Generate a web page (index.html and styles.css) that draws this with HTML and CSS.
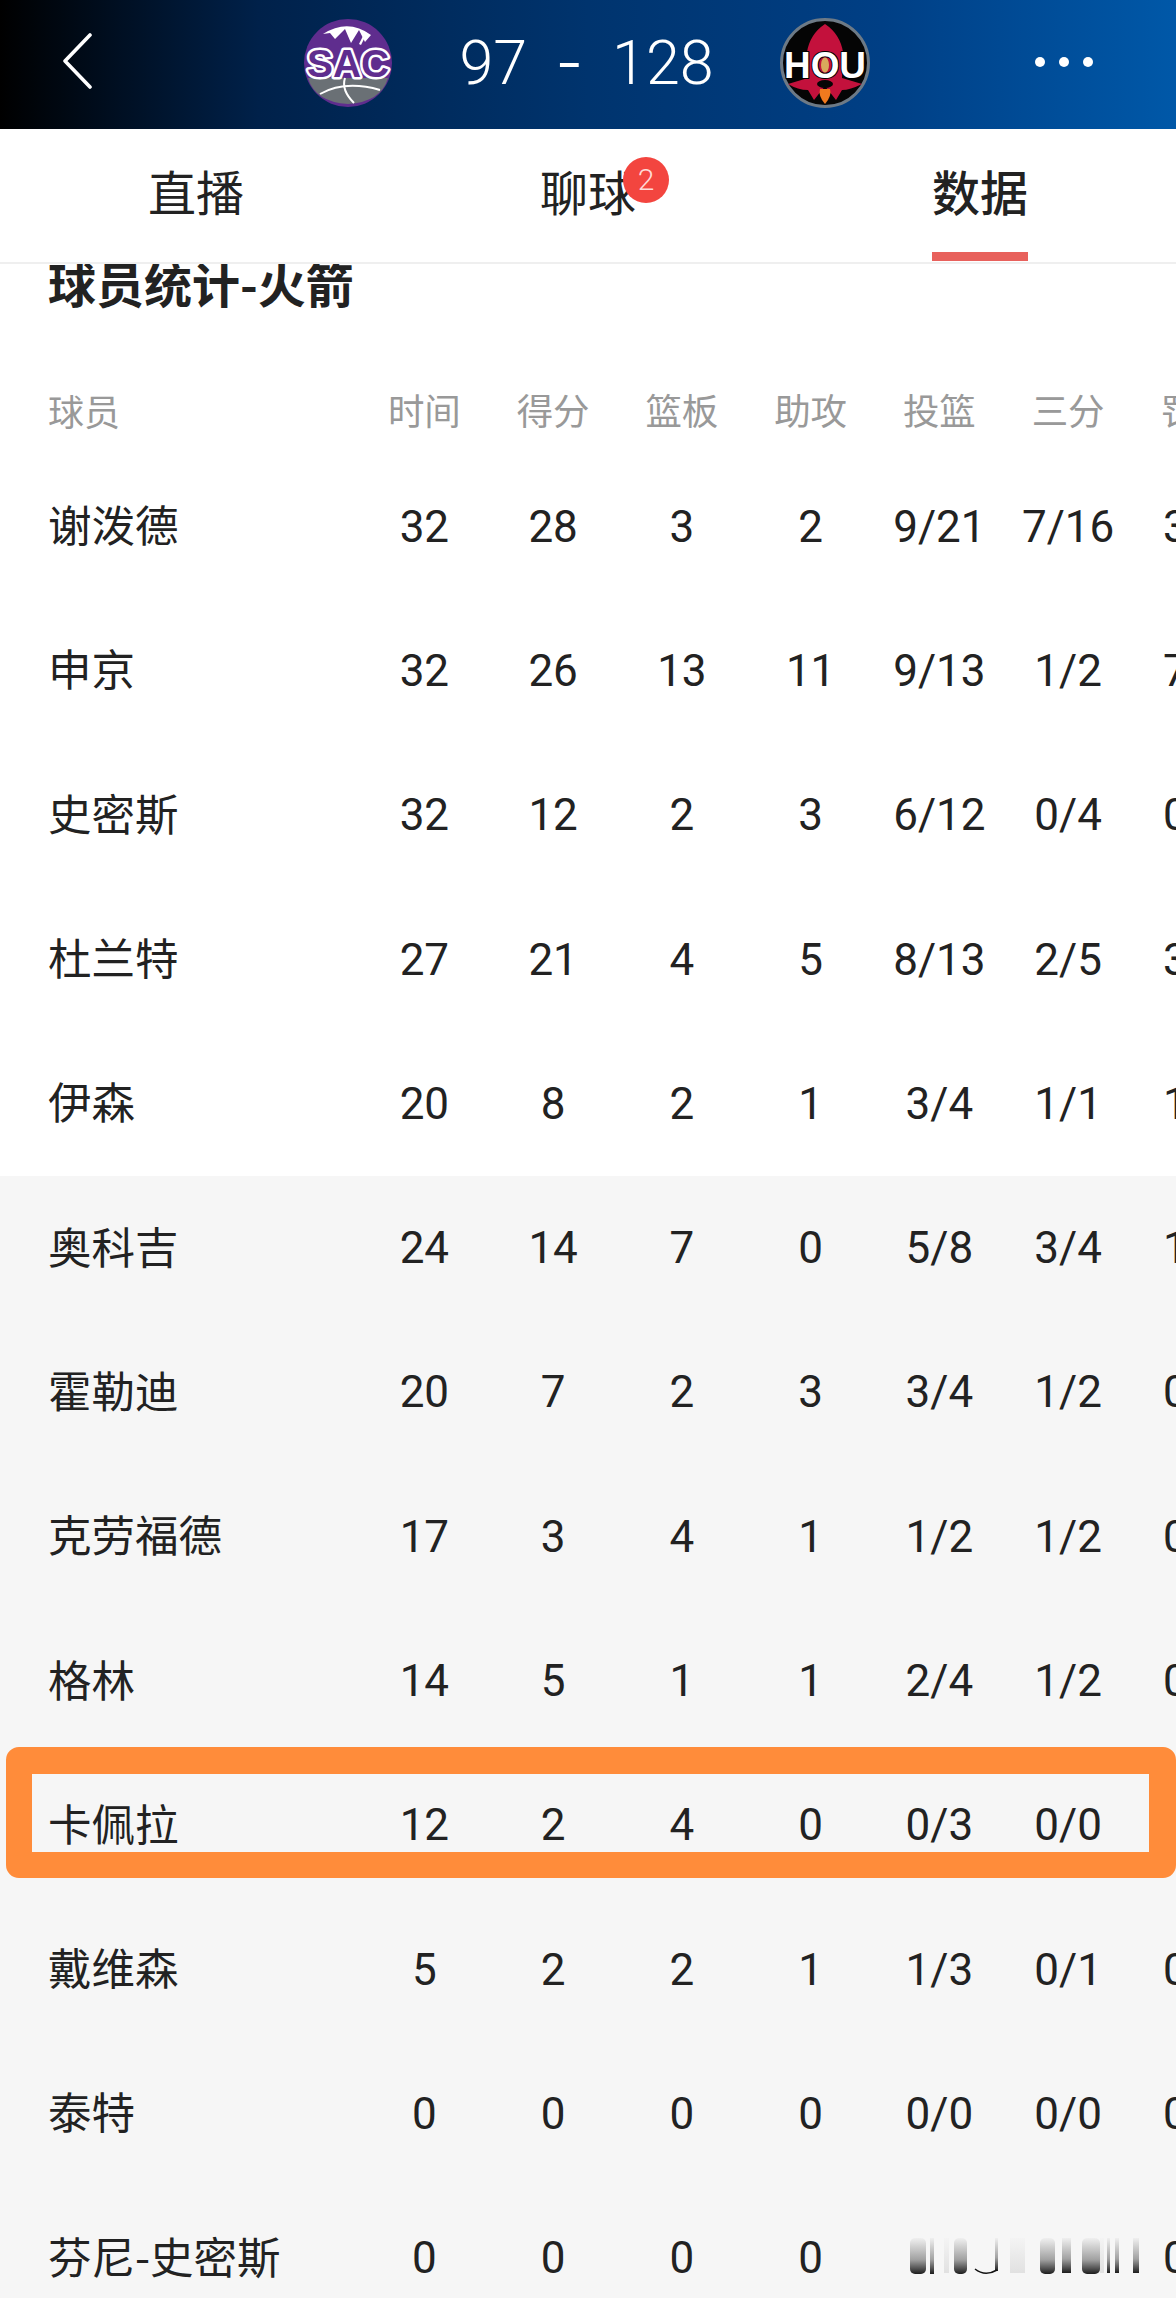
FILE: index.html
```html
<!DOCTYPE html>
<html lang="zh-CN">
<head>
<meta charset="utf-8">
<title>球员统计</title>
<link rel="stylesheet" href="styles.css">
</head>
<body>
<header class="score-bar">
  <svg class="back" viewBox="0 0 30 56" width="30" height="56"><path d="M28 2 L3 28 L28 54" fill="none" stroke="#fff" stroke-width="3.6" stroke-linecap="round" stroke-linejoin="round"/></svg>
  <div class="match">
    <svg class="logo" viewBox="0 0 90 90" width="90" height="90">
      <circle cx="45" cy="45" r="44" fill="#5f2d8e"/>
      <path d="M20 16 Q45 0 68 17 L62 24 L56 12 L48 25 L42 11 L32 21 L27 15 Z" fill="#fff"/>
      <path d="M56 26 L62 14 L64 15 L58 27 Z" fill="#fff"/>
      <path d="M5 60 H85 Q78 84 45 86 Q12 84 5 60 Z" fill="#6a7075"/>
      <path d="M17 76 Q42 62 77 72 M42 60 Q38 72 51 85" fill="none" stroke="#fff" stroke-width="2"/>
      <text class="logo-text sac" x="45" y="59" text-anchor="middle" textLength="82" lengthAdjust="spacingAndGlyphs">SAC</text>
    </svg>
    <div class="score"><span>97</span><span class="dash">-</span><span>128</span></div>
    <svg class="logo" viewBox="0 0 90 90" width="90" height="90">
      <circle cx="45" cy="45" r="43.5" fill="#050505" stroke="#6d7a86" stroke-width="3"/>
      <path d="M45 6 Q60 16 63 34 L62 60 L82 66 Q70 72 62 72 L56 82 L45 68 L34 82 L28 72 Q18 72 8 66 L28 60 L27 34 Q30 16 45 6 Z" fill="#c3113c"/>
      <ellipse cx="45" cy="66" rx="8" ry="4" fill="#050505"/>
      <path d="M45 86 Q38 78 40 71 H50 Q52 78 45 86 Z" fill="#f07a1e"/>
      <text class="logo-text hou" x="45" y="60" text-anchor="middle" textLength="82" lengthAdjust="spacingAndGlyphs">HOU</text>
      <ellipse cx="45" cy="47" rx="4" ry="7.5" fill="#d9a95c"/>
    </svg>
  </div>
  <div class="more"><i></i><i></i><i></i></div>
</header>

<nav class="tabs">
  <div class="tab">直播</div>
  <div class="tab"><span class="tab-label">聊球<b class="badge">2</b></span></div>
  <div class="tab active"><span class="tab-label">数据</span></div>
</nav>

<main class="stats">
  <h2 class="title">球员统计-火箭</h2>
  <div class="grid">
    <div class="row head"><div>球员</div><div>时间</div><div>得分</div><div>篮板</div><div>助攻</div><div>投篮</div><div>三分</div><div>罚球</div></div>
    <div class="row"><div>谢泼德</div><div>32</div><div>28</div><div>3</div><div>2</div><div>9/21</div><div>7/16</div><div>3/3</div></div>
    <div class="row"><div>申京</div><div>32</div><div>26</div><div>13</div><div>11</div><div>9/13</div><div>1/2</div><div>7/8</div></div>
    <div class="row"><div>史密斯</div><div>32</div><div>12</div><div>2</div><div>3</div><div>6/12</div><div>0/4</div><div>0/0</div></div>
    <div class="row"><div>杜兰特</div><div>27</div><div>21</div><div>4</div><div>5</div><div>8/13</div><div>2/5</div><div>3/3</div></div>
    <div class="row"><div>伊森</div><div>20</div><div>8</div><div>2</div><div>1</div><div>3/4</div><div>1/1</div><div>1/1</div></div>
    <div class="row bench"><div>奥科吉</div><div>24</div><div>14</div><div>7</div><div>0</div><div>5/8</div><div>3/4</div><div>1/2</div></div>
    <div class="row bench"><div>霍勒迪</div><div>20</div><div>7</div><div>2</div><div>3</div><div>3/4</div><div>1/2</div><div>0/0</div></div>
    <div class="row bench"><div>克劳福德</div><div>17</div><div>3</div><div>4</div><div>1</div><div>1/2</div><div>1/2</div><div>0/0</div></div>
    <div class="row bench"><div>格林</div><div>14</div><div>5</div><div>1</div><div>1</div><div>2/4</div><div>1/2</div><div>0/0</div></div>
    <div class="row bench"><div>卡佩拉</div><div>12</div><div>2</div><div>4</div><div>0</div><div>0/3</div><div>0/0</div><div>0/0</div></div>
    <div class="row bench"><div>戴维森</div><div>5</div><div>2</div><div>2</div><div>1</div><div>1/3</div><div>0/1</div><div>0/0</div></div>
    <div class="row bench"><div>泰特</div><div>0</div><div>0</div><div>0</div><div>0</div><div>0/0</div><div>0/0</div><div>0/0</div></div>
    <div class="row bench"><div>芬尼-史密斯</div><div>0</div><div>0</div><div>0</div><div>0</div>
      <div class="smear-cell">
        <svg class="smear" viewBox="0 0 270 38" width="270" height="38">
          <defs>
            <linearGradient id="fade" x1="0" y1="0" x2="0" y2="1"><stop offset="0" stop-color="#222" stop-opacity="0.03"/><stop offset="0.6" stop-color="#222" stop-opacity="0.4"/><stop offset="1" stop-color="#111" stop-opacity="0.95"/></linearGradient>
            <linearGradient id="faint" x1="0" y1="0" x2="0" y2="1"><stop offset="0" stop-color="#222" stop-opacity="0.01"/><stop offset="1" stop-color="#222" stop-opacity="0.1"/></linearGradient>
          </defs>
          <rect x="35" y="1" width="16" height="36" rx="5" fill="url(#fade)"/>
          <rect x="55" y="1" width="4" height="36" fill="url(#fade)"/>
          <rect x="69" y="1" width="5" height="35" fill="url(#faint)"/>
          <rect x="79" y="1" width="13" height="36" rx="5" fill="url(#fade)"/>
          <path d="M100 32 Q110 40 122 33" fill="none" stroke="#111" stroke-width="1.5"/>
          <rect x="120" y="1" width="3" height="33" fill="url(#fade)"/>
          <rect x="135" y="1" width="15" height="35" fill="url(#faint)"/>
          <rect x="165" y="1" width="15" height="36" rx="5" fill="url(#fade)"/>
          <rect x="187" y="1" width="9" height="35" fill="url(#fade)"/>
          <rect x="207" y="1" width="18" height="36" rx="5" fill="url(#fade)"/>
          <rect x="225" y="1" width="4" height="35" fill="url(#faint)"/>
          <rect x="232" y="1" width="3" height="35" fill="url(#fade)"/>
          <rect x="240" y="1" width="4" height="35" fill="url(#fade)"/>
          <rect x="258" y="1" width="6" height="35" fill="url(#fade)"/>
        </svg>
      </div>
      <div>0/0</div></div>
  </div>
</main>
<div class="highlight"></div>
</body>
</html>
```

FILE: styles.css
```css
* { box-sizing: border-box; }
html, body { margin: 0; height: 2298px; overflow: hidden; background: #fff; }
body {
  position: relative;
  font-family: Roboto, "Noto Sans CJK SC", sans-serif;
  color: #222;
}

.score-bar {
  height: 129px;
  display: flex;
  align-items: center;
  padding: 0 83px 0 62px;
  color: #fff;
  background: linear-gradient(90deg, #000 0, #00214a 22%, #00346e 50%, #003f85 75%, #0058a8 100%);
}
.back { flex: none; margin-top: -7px; }
.match {
  flex: 1;
  display: flex;
  align-items: center;
  justify-content: center;
  gap: 66px;
  margin-left: 46px;
  margin-top: -4px;
}
.logo { flex: none; }
.logo-text {
  font-family: "Liberation Sans", sans-serif;
  font-weight: 700;
  font-size: 38px;
  paint-order: stroke;
  stroke-linejoin: round;
}
.sac { fill: #5f2d8e; stroke: #fff; stroke-width: 5px; }
.hou { fill: #fff; stroke: #000; stroke-width: 2px; font-size: 36px; }
.score {
  display: flex;
  align-items: center;
  gap: 31px;
  font-weight: 300;
  font-size: 61px;
  line-height: 60px;
  white-space: nowrap;
}
.dash { font-size: 80px; line-height: 60px; }
.more { display: flex; gap: 14px; margin-top: -5px; }
.more i { width: 10px; height: 10px; border-radius: 50%; background: #fff; }

.tabs {
  height: 135px;
  display: flex;
  background: #fff;
  border-bottom: 2px solid #efefef;
}
.tab {
  flex: 1;
  display: flex;
  justify-content: center;
  font-family: "Noto Sans CJK SC", sans-serif;
  font-size: 48px;
  line-height: 122px;
  color: #222;
}
.tab-label { position: relative; display: block; height: 132px; }
.badge {
  position: absolute;
  left: 83px;
  top: 28px;
  width: 46px;
  height: 46px;
  border-radius: 50%;
  background: #f3453f;
  color: #ffd9d6;
  font-family: Roboto, sans-serif;
  font-weight: 300;
  font-size: 30px;
  line-height: 46px;
  text-align: center;
}
.active { font-weight: 500; }
.active .tab-label::after {
  content: "";
  position: absolute;
  left: 0;
  right: 0;
  bottom: 0;
  height: 9px;
  background: #e8615c;
}

.stats { overflow: hidden; }
.title {
  margin: 0 0 56.5px 48px;
  height: 44px;
  font-family: "Noto Sans CJK SC", sans-serif;
  font-size: 48px;
  line-height: 37px;
  font-weight: 700;
  color: #222;
}

.grid { width: 1263px; }
.row {
  display: grid;
  grid-template-columns: 360px repeat(7, 128.75px);
  align-items: center;
  height: 144.3px;
  text-align: center;
  font-size: 44px;
  color: #222;
  white-space: nowrap;
}
.row > :first-child {
  padding: 0 0 6px 48px;
  text-align: left;
  font-family: "Noto Sans CJK SC", sans-serif;
  font-size: 43.5px;
}
.head {
  height: 90px;
  font-family: "Noto Sans CJK SC", sans-serif;
  font-size: 36.5px;
  color: #999;
}
.head > :first-child { padding-bottom: 0; font-size: 36px; }
.bench { background: #f6f6f6; }

.smear-cell { grid-column: span 2; text-align: left; }
.smear { display: block; overflow: visible; margin-top: -4px; }

.highlight {
  position: absolute;
  left: 6px;
  top: 1747px;
  width: 1170px;
  height: 131px;
  border: solid #ff8c3a;
  border-width: 27px 27px 26px 26px;
  border-radius: 13px;
}
```
